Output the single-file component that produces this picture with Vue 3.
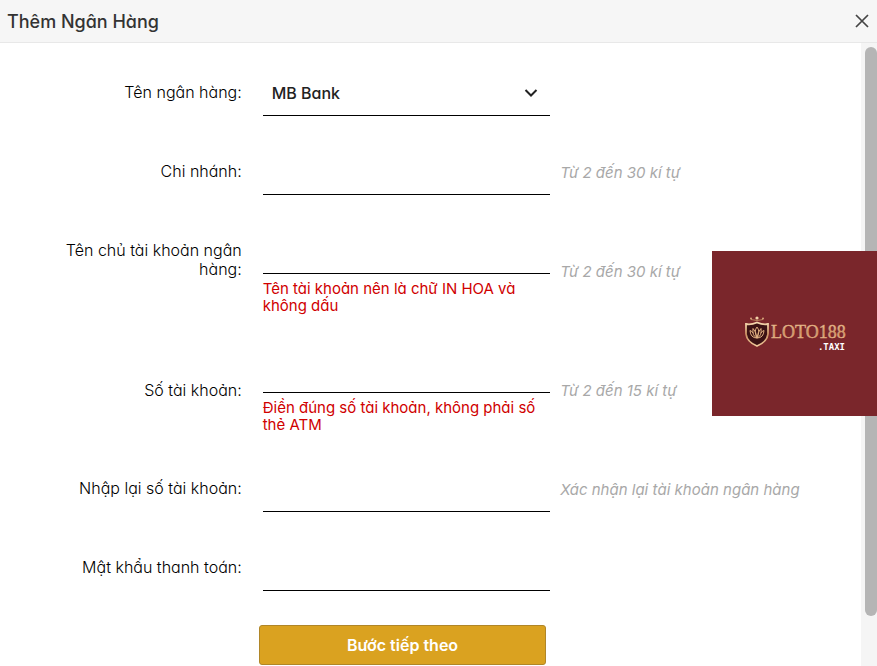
<template>
  <div class="dialog">
    <header class="dialog-header">
      <h1>Thêm Ngân Hàng</h1>
      <button type="button" class="btn-close" aria-label="Đóng">
        <svg viewBox="0 0 14 14" width="14" height="14">
          <path d="M1 1 L13 13 M13 1 L1 13" fill="none" stroke="currentColor" stroke-width="1.7" />
        </svg>
      </button>
    </header>

    <div class="dialog-body">
      <form class="bank-form" @submit.prevent>
        <!-- Bank select -->
        <div class="row">
          <label for="bank">Tên ngân hàng:</label>
          <div class="field select-field">
            <select id="bank" v-model="form.bank">
              <option v-for="bank in banks" :key="bank" :value="bank">{{ bank }}</option>
            </select>
            <svg class="chevron" viewBox="0 0 14 10" width="14" height="10">
              <path d="M1.5 2 L7 7.5 L12.5 2" fill="none" stroke="currentColor" stroke-width="2" />
            </svg>
          </div>
        </div>

        <!-- Text fields -->
        <div v-for="f in fields" :key="f.id" class="row" :class="{ centered: f.centered }">
          <label :for="f.id">{{ f.label }}</label>
          <div class="field">
            <input :id="f.id" v-model="form[f.id]" :type="f.type || 'text'" />
            <p v-if="f.note" class="note">{{ f.note }}</p>
          </div>
          <span v-if="f.hint" class="hint">{{ f.hint }}</span>
        </div>

        <div class="row">
          <button type="submit" class="btn-next">Bước tiếp theo</button>
        </div>
      </form>

      <div class="scroll-rail">
        <div class="scroll-thumb"></div>
      </div>
    </div>

    <!-- Floating brand badge -->
    <div class="brand">
      <svg viewBox="0 0 102 36" width="102" height="36">
        <defs>
          <linearGradient id="gold" x1="0" y1="0" x2="0" y2="1">
            <stop offset="0" stop-color="#f6d9b0" />
            <stop offset="0.5" stop-color="#c98f62" />
            <stop offset="1" stop-color="#f0c99b" />
          </linearGradient>
        </defs>
        <path d="M7 3.5 Q13 5.5 19 3.5" fill="none" stroke="#b9825c" stroke-width="1" />
        <circle cx="7" cy="2.5" r="1" fill="#d9a77c" />
        <circle cx="13" cy="2" r="1.6" fill="#f3d3a8" />
        <circle cx="19" cy="2.5" r="1" fill="#d9a77c" />
        <path d="M2 8 Q7 9 13 6.500 Q19 9 24 8 L24 18 Q23 26 13 30 Q3 26 2 18 Z" fill="#3a1114" stroke="url(#gold)" stroke-width="1.8" />
        <path
          d="M13 11 Q9.500 15 13 22 Q16.500 15 13 11 M13 22 Q8 20 9 12.500 Q12 15 13 22 M13 22 Q18 20 17 12.500 Q14 15 13 22 M13 22 Q6.500 22 6 14.500 Q8 15 9 17 M13 22 Q19.500 22 20 14.500 Q18 15 17 17"
          fill="none"
          stroke="#e0ae80"
          stroke-width="1"
        />
        <text x="27" y="22" class="brand-name" fill="url(#gold)" stroke="#e0ae80">LOTO188</text>
        <text x="101" y="34" class="brand-suffix" fill="#fff" text-anchor="end">.TAXI</text>
      </svg>
    </div>
  </div>
</template>

<script setup>
import { reactive } from 'vue'

const banks = ['MB Bank', 'Vietcombank', 'Techcombank', 'ACB']

const form = reactive({
  bank: 'MB Bank',
  branch: '',
  owner: '',
  account: '',
  accountConfirm: '',
  password: ''
})

const fields = [
  { id: 'branch', label: 'Chi nhánh:', hint: 'Từ 2 đến 30 kí tự' },
  {
    id: 'owner',
    label: 'Tên chủ tài khoản ngân hàng:',
    hint: 'Từ 2 đến 30 kí tự',
    note: 'Tên tài khoản nên là chữ IN HOA và không dấu'
  },
  {
    id: 'account',
    label: 'Số tài khoản:',
    hint: 'Từ 2 đến 15 kí tự',
    note: 'Điền đúng số tài khoản, không phải số thẻ ATM',
    centered: true
  },
  { id: 'accountConfirm', label: 'Nhập lại số tài khoản:', hint: 'Xác nhận lại tài khoản ngân hàng' },
  { id: 'password', label: 'Mật khẩu thanh toán:', type: 'password' }
]
</script>

<style>
body {
  margin: 0;
  background: #fff;
}
</style>

<style scoped>
.dialog {
  display: flex;
  flex-direction: column;
  min-height: 100vh;
  font-family: Inter, 'Open Sans', sans-serif;
  font-feature-settings: 'cv11';
  font-size: 16px;
  color: #000;
}

.dialog-header {
  display: flex;
  align-items: center;
  justify-content: space-between;
  box-sizing: border-box;
  height: 43px;
  padding: 0 8px 0 7px;
  background: #f6f6f6;
  border-bottom: 1px solid #e8e8e8;
}

h1 {
  margin: 0;
  font-size: 18px;
  font-weight: 500;
  color: #333;
}

.btn-close {
  display: flex;
  padding: 0;
  border: none;
  background: none;
  color: #444;
  cursor: pointer;
}

.dialog-body {
  display: flex;
  flex: 1;
}

.bank-form {
  display: flex;
  flex: 1;
  flex-direction: column;
  gap: 34px;
  padding-top: 28px;
}

.row {
  display: grid;
  grid-template-columns: minmax(0, 242fr) minmax(0, 288fr) minmax(0, 310fr);
  column-gap: 11px;
  align-items: center;
}

.row label {
  align-self: start;
  padding: 12px 0 0 50px;
  line-height: 19px;
  font-weight: 300;
  text-align: right;
}

.row.centered label {
  align-self: center;
  padding-top: 0;
}

.field {
  margin-left: 10px;
  margin-right: -10px;
}

.select-field {
  position: relative;
}

input,
select {
  display: block;
  box-sizing: border-box;
  width: 100%;
  height: 45px;
  padding: 0 9px;
  border: none;
  border-bottom: 1px solid #000;
  border-radius: 0;
  outline: none;
  background: none;
  font: inherit;
  font-feature-settings: inherit;
  color: #222;
}

select {
  appearance: none;
  font-weight: 500;
}

.chevron {
  position: absolute;
  top: 17px;
  right: 12px;
  color: #222;
  pointer-events: none;
}

.note {
  margin: 0;
  padding-top: 6px;
  font-size: 15px;
  line-height: 17px;
  color: #d00000;
}

.hint {
  padding-left: 9px;
  font-size: 15px;
  font-style: italic;
  color: #a8a8a8;
}

.btn-next {
  grid-column: 2;
  height: 40px;
  margin: 0 -6px 0 6px;
  border: 1px solid #b08628;
  border-radius: 3px;
  background: #daa220;
  color: #fff;
  font: inherit;
  font-weight: 600;
  font-feature-settings: inherit;
  cursor: pointer;
}

.scroll-rail {
  display: flex;
  box-sizing: border-box;
  width: 16px;
  padding: 4px 0 50px 4px;
  background: #f5f5f5;
}

.scroll-thumb {
  flex: 1;
  border-radius: 6px;
  background: #b5b5b5;
}

.brand {
  position: fixed;
  top: 251px;
  right: 0;
  display: flex;
  align-items: center;
  justify-content: center;
  width: 165px;
  height: 165px;
  background: #7a262b;
}

.brand-name {
  font-family: 'Liberation Serif', serif;
  font-size: 18px;
  stroke-width: 0.4;
}

.brand-suffix {
  font-family: 'DejaVu Sans Mono', monospace;
  font-size: 9px;
  font-weight: bold;
}
</style>
